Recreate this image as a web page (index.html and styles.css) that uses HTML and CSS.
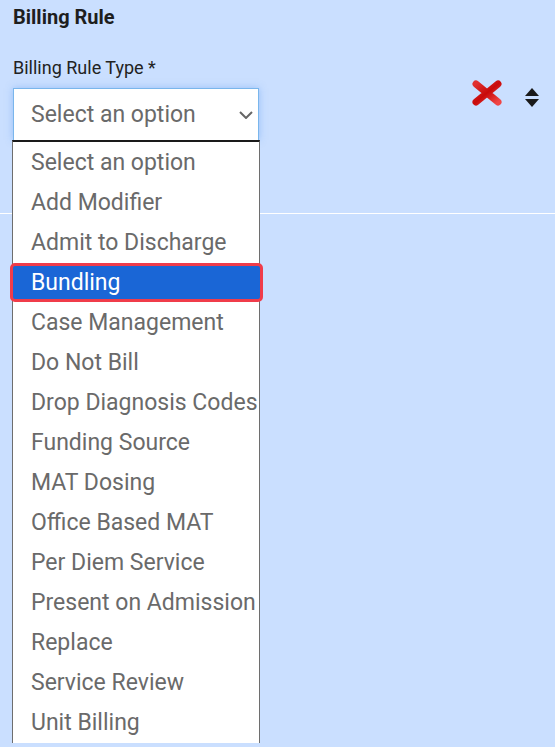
FILE: index.html
```html
<!DOCTYPE html>
<html>
<head>
<meta charset="utf-8">
<link rel="stylesheet" href="styles.css">
</head>
<body>
<div class="page">
  <h2 class="title">Billing Rule</h2>
  <div class="row">
    <div class="field">
      <label class="label">Billing Rule Type *</label>
      <div class="select">
        <span class="select-text">Select an option</span>
        <svg class="chev" width="14" height="8" viewBox="0 0 14 8"><path d="M1 1 L7 7 L13 1" fill="none" stroke="#666" stroke-width="2"/></svg>
      </div>
      <ul class="list">
        <li>Select an option</li>
        <li>Add Modifier</li>
        <li>Admit to Discharge</li>
        <li class="active">Bundling</li>
        <li>Case Management</li>
        <li>Do Not Bill</li>
        <li>Drop Diagnosis Codes</li>
        <li>Funding Source</li>
        <li>MAT Dosing</li>
        <li>Office Based MAT</li>
        <li>Per Diem Service</li>
        <li>Present on Admission</li>
        <li>Replace</li>
        <li>Service Review</li>
        <li>Unit Billing</li>
      </ul>
    </div>
    <div class="actions">
      <svg class="del" width="30" height="26" viewBox="0 0 30 26">
        <defs>
          <linearGradient id="rg" x1="0" y1="0" x2="1" y2="1">
            <stop offset="0" stop-color="#e03030"/>
            <stop offset="0.5" stop-color="#c80a0a"/>
            <stop offset="1" stop-color="#f04545"/>
          </linearGradient>
        </defs>
        <path d="M4 4 L26 22 M26 4 L4 22" stroke="url(#rg)" stroke-width="7" stroke-linecap="round"/>
      </svg>
      <svg class="sort" width="14" height="19" viewBox="0 0 14 19"><path d="M7 0 L14 8 L0 8 Z M0 11 L14 11 L7 19 Z" fill="#1a1a1a"/></svg>
    </div>
  </div>
</div>
</body>
</html>
```
FILE: styles.css
```css
html, body {
  margin: 0;
  padding: 0;
}
body {
  background: #cadfff;
  font-family: Roboto, "Noto Sans", sans-serif;
  width: 555px;
  height: 747px;
  overflow: hidden;
}
.page {
  padding: 5px 0 0 13px;
  position: relative;
}
.page::after {
  content: "";
  position: absolute;
  left: 0;
  right: 0;
  top: 213px;
  height: 1px;
  background: #ffffff;
}
.title {
  margin: 0;
  font-size: 20px;
  font-weight: 700;
  color: #1e1e1e;
  line-height: 24px;
}
.row {
  display: flex;
  margin-top: 28px;
}
.field {
  width: 246px;
  position: relative;
  z-index: 1;
}
.label {
  display: block;
  font-size: 18px;
  color: #222;
  line-height: 22px;
}
.select {
  margin-top: 9px;
  height: 52px;
  box-sizing: border-box;
  background: #fff;
  border: 1px solid #7ab6ec;
  border-bottom: none;
  box-shadow: 0 0 7px rgba(100, 160, 240, 0.5);
  display: flex;
  align-items: center;
  justify-content: space-between;
  padding: 0 5px 0 17px;
}
.select-text {
  font-size: 23px;
  line-height: 52px;
  color: #6a6a6a;
}
.chev {
  margin-top: 1px;
}
.list {
  list-style: none;
  margin: 0 0 0 -1px;
  padding: 1px 0 0;
  width: 248px;
  box-sizing: border-box;
  background: #fff;
  border: 1px solid #6e6e6e;
  border-top: 2px solid #1a1a1a;
  border-bottom: none;
  position: relative;
}
.list li {
  height: 40px;
  line-height: 40px;
  padding-left: 18px;
  font-size: 23px;
  color: #6a6a6a;
  white-space: nowrap;
}
.list li.active {
  background: #1a66d6;
  color: #fff;
  margin: 0 -4px 1px -3px;
  padding-left: 18px;
  border: 3px solid #f03c4a;
  border-radius: 5px;
  height: 33px;
  line-height: 33px;
  box-shadow: inset 0 0 0 1px #1a66d6;
}
.actions {
  display: flex;
  align-items: flex-start;
  margin-left: 213px;
  margin-top: 23px;
  gap: 23px;
}
.sort {
  margin-top: 8px;
}
```
